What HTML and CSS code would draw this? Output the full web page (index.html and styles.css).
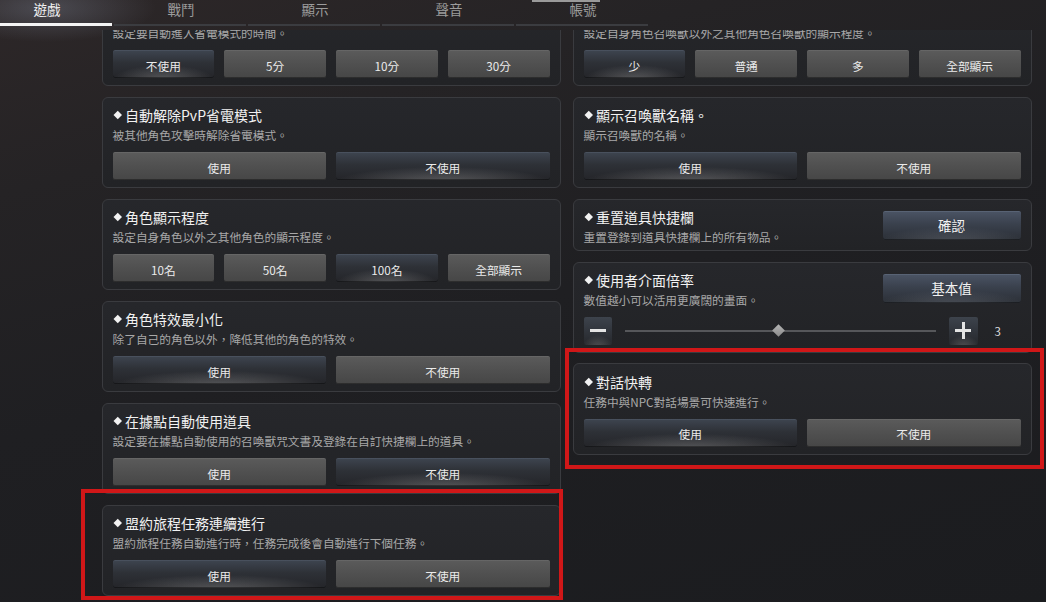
FILE: index.html
```html
<!DOCTYPE html>
<html lang="zh-Hant">
<head>
<meta charset="utf-8">
<title>設定</title>
<link rel="stylesheet" href="styles.css">
</head>
<body>
<div class="screen">
  <div class="tabbar">
    <div class="tabs">
      <div class="tab active"><span class="tab-label">遊戲</span><span class="tab-line"></span></div>
      <div class="tab"><span class="tab-label">戰鬥</span><span class="tab-line"></span></div>
      <div class="tab"><span class="tab-label">顯示</span><span class="tab-line"></span></div>
      <div class="tab"><span class="tab-label">聲音</span><span class="tab-line"></span></div>
      <div class="tab tab-mark"><span class="tab-label">帳號</span><span class="tab-line"></span></div>
    </div>
  </div>

  <div class="viewport">
    <div class="columns">
      <div class="col">
        <section class="card">
          <h3 class="title">自動省電模式</h3>
          <p class="desc">設定要自動進入省電模式的時間。</p>
          <div class="opts">
            <div class="btn on">不使用</div>
            <div class="btn">5分</div>
            <div class="btn">10分</div>
            <div class="btn">30分</div>
          </div>
        </section>
        <section class="card">
          <h3 class="title">自動解除PvP省電模式</h3>
          <p class="desc">被其他角色攻擊時解除省電模式。</p>
          <div class="opts">
            <div class="btn">使用</div>
            <div class="btn on">不使用</div>
          </div>
        </section>
        <section class="card">
          <h3 class="title">角色顯示程度</h3>
          <p class="desc">設定自身角色以外之其他角色的顯示程度。</p>
          <div class="opts">
            <div class="btn">10名</div>
            <div class="btn">50名</div>
            <div class="btn on">100名</div>
            <div class="btn">全部顯示</div>
          </div>
        </section>
        <section class="card">
          <h3 class="title">角色特效最小化</h3>
          <p class="desc">除了自己的角色以外，降低其他的角色的特效。</p>
          <div class="opts">
            <div class="btn on">使用</div>
            <div class="btn">不使用</div>
          </div>
        </section>
        <section class="card">
          <h3 class="title">在據點自動使用道具</h3>
          <p class="desc">設定要在據點自動使用的召喚獸咒文書及登錄在自訂快捷欄上的道具。</p>
          <div class="opts">
            <div class="btn">使用</div>
            <div class="btn on">不使用</div>
          </div>
        </section>
        <section class="card">
          <h3 class="title">盟約旅程任務連續進行</h3>
          <p class="desc">盟約旅程任務自動進行時，任務完成後會自動進行下個任務。</p>
          <div class="opts">
            <div class="btn on">使用</div>
            <div class="btn">不使用</div>
          </div>
        </section>
      </div>

      <div class="col">
        <section class="card">
          <h3 class="title">召喚獸顯示程度</h3>
          <p class="desc">設定自身角色召喚獸以外之其他角色召喚獸的顯示程度。</p>
          <div class="opts">
            <div class="btn on">少</div>
            <div class="btn">普通</div>
            <div class="btn">多</div>
            <div class="btn">全部顯示</div>
          </div>
        </section>
        <section class="card">
          <h3 class="title">顯示召喚獸名稱。</h3>
          <p class="desc">顯示召喚獸的名稱。</p>
          <div class="opts">
            <div class="btn on">使用</div>
            <div class="btn">不使用</div>
          </div>
        </section>
        <section class="card card-short">
          <div class="head">
            <div class="head-text">
              <h3 class="title">重置道具快捷欄</h3>
              <p class="desc">重置登錄到道具快捷欄上的所有物品。</p>
            </div>
            <div class="btn blue">確認</div>
          </div>
        </section>
        <section class="card">
          <div class="head">
            <div class="head-text">
              <h3 class="title">使用者介面倍率</h3>
              <p class="desc">數值越小可以活用更廣闊的畫面。</p>
            </div>
            <div class="btn blue">基本值</div>
          </div>
          <div class="slider-row">
            <div class="step"><span class="bar-h"></span></div>
            <div class="track"><span class="thumb"></span></div>
            <div class="step"><span class="bar-h"></span><span class="bar-v"></span></div>
            <div class="value">3</div>
          </div>
        </section>
        <section class="card">
          <h3 class="title">對話快轉</h3>
          <p class="desc">任務中與NPC對話場景可快速進行。</p>
          <div class="opts">
            <div class="btn on">使用</div>
            <div class="btn">不使用</div>
          </div>
        </section>
      </div>
    </div>
  </div>

  <div class="mark mark-left"></div>
  <div class="mark mark-right"></div>
</div>
</body>
</html>
```

FILE: styles.css
```css
* {
  box-sizing: border-box;
  margin: 0;
  padding: 0;
}

html, body {
  width: 1046px;
  height: 602px;
  overflow: hidden;
  background: #1c1d20;
}

body {
  font-family: "Noto Sans CJK TC", "Noto Sans", sans-serif;
  color: #e6e6e6;
}

.screen {
  position: relative;
  width: 1046px;
  height: 602px;
  overflow: hidden;
  background:
    radial-gradient(ellipse 110px 34px at 46px 8px, rgba(140, 150, 170, 0.32), rgba(140, 150, 170, 0) 100%),
    linear-gradient(165deg, #2d2728 0%, #252325 22%, #1f1f22 50%, #1b1c1f 100%);
}

/* ---------- tabs ---------- */
.tabbar {
  height: 30px;
}

.tabs {
  display: flex;
  margin-left: -20px;
}

.tab {
  position: relative;
  width: 134px;
  display: flex;
  flex-direction: column;
}

.tab-label {
  display: block;
  height: 24px;
  line-height: 18px;
  font-size: 13.5px;
  text-align: center;
  color: #9c9c9c;
}

.tab-line {
  display: block;
  height: 2px;
  margin-right: 2px;
  background: #3b3c40;
}

.tab.active .tab-label {
  color: #f2f2f2;
}

.tab.active .tab-line {
  height: 3px;
  margin-top: -1px;
  background: #f4f4f4;
}

.tab-mark::before {
  content: "";
  position: absolute;
  left: 16px;
  top: 0;
  width: 68px;
  height: 1.5px;
  background: #9a9a9a;
}

/* ---------- content ---------- */
.viewport {
  height: 572px;
  overflow: hidden;
}

.columns {
  display: flex;
  gap: 12px;
  padding-left: 101.5px;
  margin-top: -35.5px;
}

.col {
  width: 459px;
  display: flex;
  flex-direction: column;
  gap: 10.5px;
}

.card {
  background: linear-gradient(180deg, #26272b 0%, #222326 100%);
  border: 1px solid #3a3b3f;
  border-radius: 6px;
  padding: 8.5px 10px 7px;
}

.card-short {
  padding-bottom: 5px;
}

.title {
  display: flex;
  align-items: center;
  height: 18px;
  line-height: 18px;
  font-size: 14px;
  font-weight: normal;
  color: #f2f2f2;
  white-space: nowrap;
}

.title::before {
  content: "";
  width: 5.5px;
  height: 5.5px;
  margin: 0 4.5px 0 2.5px;
  background: #f2f2f2;
  transform: rotate(45deg);
  flex: none;
}

.desc {
  margin-top: 3px;
  height: 16px;
  line-height: 16px;
  font-size: 11.7px;
  color: #a8a8a8;
  white-space: nowrap;
}

.opts {
  display: flex;
  gap: 10px;
  margin-top: 9px;
}

.btn {
  flex: 1;
  height: 28px;
  display: flex;
  align-items: center;
  justify-content: center;
  padding-top: 2px;
  font-size: 11.7px;
  color: #ebebeb;
  border-radius: 2px;
  background: linear-gradient(180deg, #5b5b5b 0%, #505050 50%, #464646 100%);
  box-shadow: inset 0 1px 0 rgba(255, 255, 255, 0.07), inset 0 -1px 0 rgba(0, 0, 0, 0.35);
  white-space: nowrap;
}

.btn.on {
  background:
    radial-gradient(ellipse 50% 55% at 50% 108%, rgba(175, 175, 175, 0.38), rgba(175, 175, 175, 0) 100%),
    linear-gradient(180deg, #3e4550 0%, #2e3137 45%, #242529 100%);
  box-shadow: inset 0 1px 0 rgba(160, 175, 200, 0.12), inset 0 -1px 0 rgba(0, 0, 0, 0.4);
}

.head {
  display: flex;
  align-items: center;
  justify-content: space-between;
}

.btn.blue {
  flex: none;
  width: 138px;
  height: 29px;
  margin-bottom: 3px;
  padding-top: 0;
  font-size: 13.5px;
  color: #f2f2f2;
  background:
    radial-gradient(ellipse 55% 55% at 50% 110%, rgba(150, 155, 165, 0.3), rgba(150, 155, 165, 0) 100%),
    linear-gradient(180deg, #4b5465 0%, #3a414d 45%, #2b2f36 100%);
  box-shadow: inset 0 1px 0 rgba(170, 185, 210, 0.15), inset 0 -1px 0 rgba(0, 0, 0, 0.4);
}

/* ---------- slider ---------- */
.slider-row {
  display: flex;
  align-items: center;
  margin-top: 8.5px;
  height: 28px;
}

.step {
  position: relative;
  flex: none;
  width: 28.5px;
  height: 28px;
  border-radius: 2px;
  background:
    radial-gradient(ellipse 55% 45% at 50% 110%, rgba(160, 160, 160, 0.35), rgba(160, 160, 160, 0) 100%),
    linear-gradient(180deg, #3d434c 0%, #31353c 50%, #26282c 100%);
  display: flex;
  align-items: center;
  justify-content: center;
}

.bar-h {
  position: absolute;
  width: 16px;
  height: 3.5px;
  background: #e4e4e4;
}

.bar-v {
  position: absolute;
  width: 3.5px;
  height: 17px;
  background: #e4e4e4;
}

.track {
  position: relative;
  flex: 1;
  height: 2px;
  margin: 0 13px;
  background: #56575a;
}

.thumb {
  position: absolute;
  left: 49.5%;
  top: 50%;
  width: 9px;
  height: 9px;
  margin: -4.5px 0 0 -4.5px;
  background: linear-gradient(135deg, #b5b5b5, #8a8a8a);
  transform: rotate(45deg);
}

.value {
  flex: none;
  width: 43px;
  padding-left: 17px;
  font-size: 11.5px;
  color: #dedede;
}

/* ---------- annotation boxes ---------- */
.mark {
  position: absolute;
  border: 4.5px solid #d01718;
}

.mark-left {
  left: 81px;
  top: 489px;
  width: 482px;
  height: 111px;
}

.mark-right {
  left: 564.5px;
  top: 348px;
  width: 479px;
  height: 120.5px;
}
```
